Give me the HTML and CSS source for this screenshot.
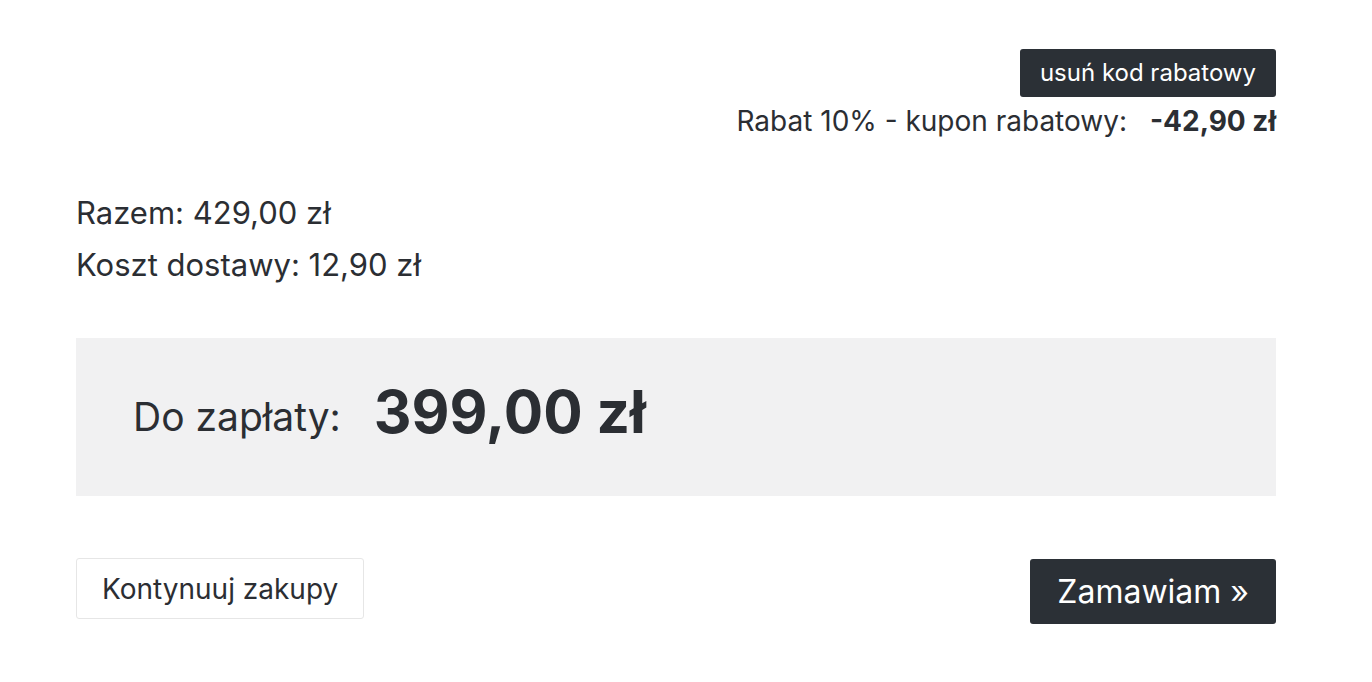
FILE: index.html
```html
<!DOCTYPE html>
<html lang="pl">
<head>
<meta charset="utf-8">
<link rel="stylesheet" href="styles.css">
</head>
<body>
<div class="cart">
  <div class="coupon">
    <button class="btn-remove">usuń kod rabatowy</button>
    <div class="discount"><span class="discount-label">Rabat 10% - kupon rabatowy:</span><span class="discount-value">-42,90 zł</span></div>
  </div>
  <div class="totals">
    <div class="total-line">Razem: 429,00 zł</div>
    <div class="total-line">Koszt dostawy: 12,90 zł</div>
  </div>
  <div class="pay-box">
    <span class="pay-label">Do zapłaty:</span>
    <span class="pay-value">399,00 zł</span>
  </div>
  <div class="actions">
    <button class="btn-continue">Kontynuuj zakupy</button>
    <button class="btn-order">Zamawiam »</button>
  </div>
</div>
</body>
</html>
```
FILE: styles.css
```css
* { box-sizing: border-box; }
html, body { margin: 0; padding: 0; background: #ffffff; }
body {
  font-family: "Inter", "Liberation Sans", sans-serif;
  color: #2b2e33;
}
.cart {
  width: 1200px;
  margin-left: 76px;
  padding-top: 49px;
}
.coupon {
  display: flex;
  flex-direction: column;
  align-items: flex-end;
}
.btn-remove {
  font-family: inherit;
  font-size: 24px;
  color: #ffffff;
  background: #2b3036;
  border: none;
  border-radius: 3px;
  height: 48px;
  padding: 0 20px;
  line-height: 48px;
}
.discount {
  margin-top: 8px;
  font-size: 28px;
  line-height: 32px;
  display: flex;
  gap: 23px;
}
.discount-value { font-weight: 700; }
.totals {
  margin-top: 50px;
  font-size: 31px;
  line-height: 52px;
}
.pay-box {
  margin-top: 47px;
  height: 158px;
  background: #f1f1f2;
  display: flex;
  align-items: center;
  padding-left: 57px;
  gap: 33px;
}
.pay-label { font-size: 39px; line-height: 48px; }
.pay-value { font-size: 58.5px; font-weight: 700; line-height: 70px; margin-bottom: 10px; }
.actions {
  margin-top: 62px;
  display: flex;
  justify-content: space-between;
  align-items: flex-start;
}
.btn-continue {
  font-family: inherit;
  font-size: 28px;
  color: #2b2e33;
  background: #ffffff;
  border: 1px solid #e6e6e6;
  border-radius: 3px;
  height: 61px;
  padding: 0 25px;
}
.btn-order {
  font-family: inherit;
  font-size: 32px;
  color: #ffffff;
  background: #2b3036;
  border: none;
  border-radius: 3px;
  height: 65px;
  padding: 0 27px;
  margin-top: 1px;
}
```
